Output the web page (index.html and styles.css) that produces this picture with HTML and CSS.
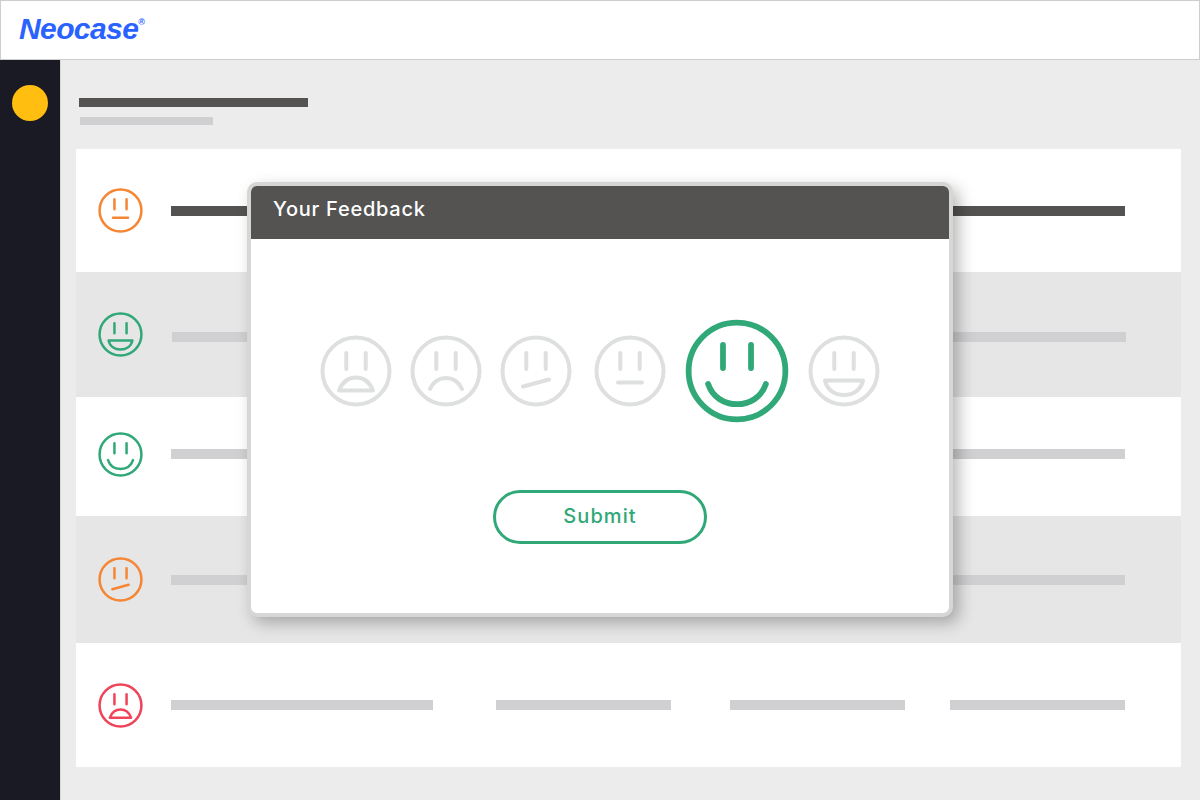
FILE: index.html
```html
<!DOCTYPE html>
<html>

<head>
    <meta charset="UTF-8">
    <title>Neocase - Your Feedback</title>
    <link rel="stylesheet" href="styles.css">
</head>

<body>
    <svg class="defs" width="0" height="0">
        <symbol id="face-awful" viewBox="-36 -36 72 72">
            <circle r="33.5" />
            <path d="M-9.7 -18V-2M9.7 -18V-2" />
            <path d="M-17 19.5C-13 9 -7 6.5 0 6.5C7 6.5 13 9 17 19.5Z" />
        </symbol>
        <symbol id="face-sad" viewBox="-36 -36 72 72">
            <circle r="33.5" />
            <path d="M-9.7 -18V-2M9.7 -18V-2" />
            <path d="M-16 18C-12 9.5 -6 7 0 7C6 7 12 9.5 16 18" />
        </symbol>
        <symbol id="face-meh" viewBox="-36 -36 72 72">
            <circle r="33.5" />
            <path d="M-9.7 -18V-2M9.7 -18V-2" />
            <path d="M-13 15.5L13 8.5" />
        </symbol>
        <symbol id="face-neutral" viewBox="-36 -36 72 72">
            <circle r="33.5" />
            <path d="M-9.7 -18V-2M9.7 -18V-2" />
            <path d="M-12 11.5H12" />
        </symbol>
        <symbol id="face-smile" viewBox="-36 -36 72 72">
            <circle r="33.5" />
            <path d="M-9.7 -18V-2M9.7 -18V-2" />
            <path d="M-20 9C-17 18 -9 23 0 23C9 23 17 18 20 9" />
        </symbol>
        <symbol id="face-laugh" viewBox="-36 -36 72 72">
            <circle r="33.5" />
            <path d="M-9.7 -18V-2M9.7 -18V-2" />
            <path d="M-19 9.5H19C17 19 9 24 0 24C-9 24 -17 19 -19 9.5Z" />
        </symbol>
    </svg>

    <header class="topbar">
        <span class="logo">Neocase<sup class="logo-reg">®</sup></span>
    </header>

    <div class="layout">
        <aside class="sidebar">
            <div class="avatar"></div>
        </aside>

        <main class="content">
            <div class="page-title"></div>
            <div class="page-subtitle"></div>

            <div class="rows">
                <div class="row row-strong">
                    <svg class="face orange"><use href="#face-neutral" /></svg>
                    <div class="bar"></div>
                    <div class="bar"></div>
                    <div class="bar"></div>
                    <div class="bar"></div>
                </div>
                <div class="row row-alt row-low">
                    <svg class="face green"><use href="#face-laugh" /></svg>
                    <div class="bar"></div>
                    <div class="bar"></div>
                    <div class="bar"></div>
                    <div class="bar"></div>
                </div>
                <div class="row row-raised">
                    <svg class="face green"><use href="#face-smile" /></svg>
                    <div class="bar"></div>
                    <div class="bar"></div>
                    <div class="bar"></div>
                    <div class="bar"></div>
                </div>
                <div class="row row-alt">
                    <svg class="face orange"><use href="#face-meh" /></svg>
                    <div class="bar"></div>
                    <div class="bar"></div>
                    <div class="bar"></div>
                    <div class="bar"></div>
                </div>
                <div class="row">
                    <svg class="face red"><use href="#face-awful" /></svg>
                    <div class="bar"></div>
                    <div class="bar"></div>
                    <div class="bar"></div>
                    <div class="bar"></div>
                </div>
            </div>
        </main>
    </div>

    <div class="modal">
        <div class="modal-head">Your Feedback</div>
        <div class="modal-body">
            <div class="faces">
                <svg class="rate"><use href="#face-awful" /></svg>
                <svg class="rate"><use href="#face-sad" /></svg>
                <svg class="rate"><use href="#face-meh" /></svg>
                <svg class="rate rate-neutral"><use href="#face-neutral" /></svg>
                <svg class="rate rate-active"><use href="#face-smile" /></svg>
                <svg class="rate"><use href="#face-laugh" /></svg>
            </div>
            <button class="submit">Submit</button>
        </div>
    </div>
</body>

</html>
```

FILE: styles.css
```css
body {
    margin: 0;
    height: 800px;
    overflow: hidden;
    background: #ececec;
    font-family: Inter, "Open Sans", sans-serif;
}

.defs {
    position: absolute;
}

symbol {
    overflow: visible;
}

symbol circle,
symbol path {
    fill: none;
    stroke: currentColor;
    stroke-width: 4;
    stroke-linecap: round;
    stroke-linejoin: round;
}

/* top bar */
.topbar {
    box-sizing: border-box;
    height: 60px;
    padding: 0 0 2px 18px;
    display: flex;
    align-items: center;
    background: #fff;
    border: 1px solid #cdcdcd;
}

.logo {
    color: #2962ff;
    font-family: "Liberation Sans", Arial, sans-serif;
    font-size: 30px;
    font-weight: bold;
    font-style: italic;
    letter-spacing: -0.6px;
    line-height: 1;
}

.logo-reg {
    font-size: 9px;
    font-style: normal;
    font-weight: bold;
    letter-spacing: 0;
    vertical-align: 14px;
    line-height: 0;
}

/* layout */
.layout {
    display: flex;
    height: 740px;
}

.sidebar {
    box-sizing: border-box;
    width: 61px;
    padding: 25px 0 0 12px;
    background: #191a24;
    border-right: 1px solid #d8d8d8;
}

.avatar {
    width: 36px;
    height: 36px;
    border-radius: 50%;
    background: #ffbe10;
}

.content {
    flex: 1;
    padding: 38px 19px 0 15px;
}

.page-title {
    width: 229px;
    height: 9px;
    margin-left: 3px;
    background: #545352;
}

.page-subtitle {
    width: 133px;
    height: 8px;
    margin: 10px 0 24px 4px;
    background: #d0d0d2;
}

/* rows */
.row {
    box-sizing: border-box;
    height: 124px;
    padding-left: 22px;
    display: grid;
    grid-template-columns: 73px 325px 234px 220px 175px;
    align-items: center;
    background: #fff;
}

.row-strong {
    height: 123px;
}

.row-strong .bar {
    background: #545352;
}

.row-alt {
    height: 127px;
    background: #e6e6e6;
}

.row-low {
    height: 125px;
}

.row-low .bar {
    margin: 5px 0 0 1px;
}

.row-raised {
    height: 119px;
    padding-bottom: 5px;
}

.bar {
    height: 10px;
    background: #d0d0d2;
}

.row .bar:nth-child(2) {
    width: 262px;
}

.row .bar:nth-child(3) {
    width: 175px;
}

.row .bar:nth-child(4) {
    width: 175px;
}

.row .bar:nth-child(5) {
    width: 175px;
}

.face {
    width: 45px;
    height: 45px;
}

.orange {
    color: #f58634;
}

.green {
    color: #31a878;
}

.red {
    color: #ef4459;
}

/* feedback popup */
.modal {
    position: absolute;
    top: 182px;
    left: 247px;
    box-sizing: border-box;
    width: 706px;
    height: 435px;
    display: flex;
    flex-direction: column;
    background: #fff;
    border: 4px solid #d6d7d4;
    border-radius: 10px;
    box-shadow: 6px 6px 16px rgba(0, 0, 0, 0.28);
}

.modal-head {
    height: 53px;
    padding-left: 22px;
    border-radius: 6px 6px 0 0;
    background: #545352;
    color: #fff;
    font-size: 20px;
    font-weight: 500;
    letter-spacing: 0.75px;
    line-height: 47px;
}

.modal-body {
    flex: 1;
    padding-top: 80px;
    display: flex;
    flex-direction: column;
    align-items: center;
}

.faces {
    display: flex;
    align-items: center;
    gap: 18px;
    height: 104px;
}

.rate {
    width: 72px;
    height: 72px;
    color: #dedfdf;
}

.rate-neutral {
    margin-left: 4px;
}

.rate-active {
    width: 104px;
    height: 104px;
    margin: 0 1px;
    color: #31a878;
}

.submit {
    box-sizing: border-box;
    width: 214px;
    height: 54px;
    margin-top: 67px;
    padding: 0 0 3px;
    background: #fff;
    border: 3px solid #31a878;
    border-radius: 27px;
    color: #31a878;
    font-family: Inter, "Open Sans", sans-serif;
    font-size: 20px;
    font-weight: 500;
    letter-spacing: 1.1px;
}
```
